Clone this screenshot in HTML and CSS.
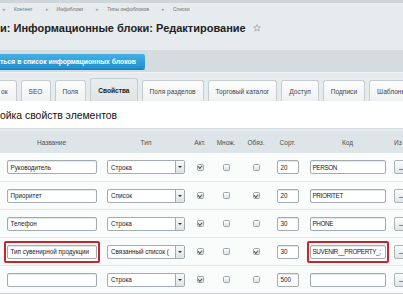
FILE: index.html
```html
<!DOCTYPE html>
<html lang="ru">
<head>
    <meta charset="UTF-8">
    <title>Информационные блоки: Редактирование</title>
    <link rel="stylesheet" href="styles.css">
</head>
<body>
    <div class="crumbs">
        <span class="crumb"><span class="arrow">▸</span>Контент</span>
        <span class="crumb"><span class="arrow">▸</span>Инфоблоки</span>
        <span class="crumb"><span class="arrow">▸</span>Типы инфоблоков</span>
        <span class="crumb"><span class="arrow">▸</span>Списки</span>
    </div>

    <div class="title-row">
        <h1 class="title">и: Информационные блоки: Редактирование</h1>
        <svg class="star" viewBox="0 0 10 10" width="8" height="8">
            <path d="M5 0.8 L6.2 3.6 L9.2 3.8 L6.9 5.8 L7.6 8.8 L5 7.2 L2.4 8.8 L3.1 5.8 L0.8 3.8 L3.8 3.6 Z" fill="none" stroke="#8f979a" stroke-width="0.8" stroke-linejoin="round"/>
        </svg>
    </div>

    <div class="toolbar">
        <a class="btn-back">ться в список информационных блоков</a>
    </div>

    <div class="tabs">
        <div class="tab tab-first">ок</div>
        <div class="tab">SEO</div>
        <div class="tab">Поля</div>
        <div class="tab active">Свойства</div>
        <div class="tab">Поля разделов</div>
        <div class="tab">Торговый каталог</div>
        <div class="tab">Доступ</div>
        <div class="tab">Подписи</div>
        <div class="tab">Шаблоны</div>
    </div>

    <div class="panel">
        <h2 class="panel-title">ойка свойств элементов</h2>
    </div>

    <div class="props">
        <div class="props-head">
            <div>Название</div>
            <div>Тип</div>
            <div>Акт.</div>
            <div>Множ.</div>
            <div>Обяз.</div>
            <div>Сорт.</div>
            <div>Код</div>
            <div class="left">Из</div>
        </div>

        <div class="props-row">
            <div><span class="field name">Руководитель</span></div>
            <div><span class="select"><span class="select-text">Строка</span><span class="select-arrow"></span></span></div>
            <div><span class="cb checked"></span></div>
            <div><span class="cb"></span></div>
            <div><span class="cb"></span></div>
            <div><span class="field sort">20</span></div>
            <div><span class="field code">PERSON</span></div>
            <div class="left"><span class="dots">...</span></div>
        </div>

        <div class="props-row">
            <div><span class="field name">Приоритет</span></div>
            <div><span class="select"><span class="select-text">Список</span><span class="select-arrow"></span></span></div>
            <div><span class="cb checked"></span></div>
            <div><span class="cb"></span></div>
            <div><span class="cb checked"></span></div>
            <div><span class="field sort">20</span></div>
            <div><span class="field code">PRIORITET</span></div>
            <div class="left"><span class="dots">...</span></div>
        </div>

        <div class="props-row">
            <div><span class="field name">Телефон</span></div>
            <div><span class="select"><span class="select-text">Строка</span><span class="select-arrow"></span></span></div>
            <div><span class="cb checked"></span></div>
            <div><span class="cb"></span></div>
            <div><span class="cb"></span></div>
            <div><span class="field sort">30</span></div>
            <div><span class="field code">PHONE</span></div>
            <div class="left"><span class="dots">...</span></div>
        </div>

        <div class="props-row">
            <div><span class="mark"><span class="field name">Тип сувенирной продукции</span></span></div>
            <div><span class="select"><span class="select-text">Связанный список (</span><span class="select-arrow"></span></span></div>
            <div><span class="cb checked"></span></div>
            <div><span class="cb"></span></div>
            <div><span class="cb checked"></span></div>
            <div><span class="field sort">30</span></div>
            <div><span class="mark"><span class="field code">SUVENIR__PROPERTY_;</span></span></div>
            <div class="left"><span class="dots">...</span></div>
        </div>

        <div class="props-row">
            <div><span class="field name"></span></div>
            <div><span class="select"><span class="select-text">Строка</span><span class="select-arrow"></span></span></div>
            <div><span class="cb checked"></span></div>
            <div><span class="cb"></span></div>
            <div><span class="cb"></span></div>
            <div><span class="field sort">500</span></div>
            <div><span class="field code"></span></div>
            <div class="left"><span class="dots">...</span></div>
        </div>
    </div>
</body>
</html>
```

FILE: styles.css
```css
* {
    margin: 0;
    padding: 0;
    box-sizing: border-box;
}

body {
    font-family: "Liberation Sans", Arial, sans-serif;
    width: 403px;
    height: 294px;
    overflow: hidden;
    background-color: #e6ebed;
    color: #333;
}

/* breadcrumbs */
.crumbs {
    height: 15px;
    border-top: 3px solid #cfd6d9;
    display: flex;
    align-items: center;
    gap: 13px;
    padding-left: 3px;
    font-size: 5px;
    color: #6b7376;
}

.crumb {
    display: flex;
    align-items: center;
}

.arrow {
    color: #9aa2a5;
    font-size: 5px;
    margin-right: 8px;
}

/* page title */
.title-row {
    height: 35px;
    display: flex;
    align-items: center;
    gap: 7px;
    padding-bottom: 9px;
}

.title {
    font-size: 11px;
    font-weight: bold;
    color: #222;
}

.toolbar {
    height: 23px;
    background-color: #d5dcdf;
    border-bottom: 1px solid #eef2f3;
    display: flex;
    align-items: center;
}

.btn-back {
    height: 15px;
    margin-left: -6px;
    padding: 0 9px 0 6px;
    display: flex;
    align-items: center;
    font-size: 6.8px;
    font-weight: bold;
    color: #fff;
    background: linear-gradient(#44b2e6, #1f8ecf);
    border-radius: 2px;
    box-shadow: 0 1px 0 #1b7bb4;
}

/* tabs */
.tabs {
    height: 28px;
    display: flex;
    align-items: flex-end;
    gap: 4px;
}

.tab {
    height: 21px;
    padding: 0 7px;
    display: flex;
    align-items: center;
    font-size: 6.6px;
    color: #444;
    white-space: nowrap;
    background: linear-gradient(#fcfdfd, #eff2f3);
    border: 1px solid #c4ccd0;
    border-bottom: none;
    border-radius: 3px 3px 0 0;
}

.tab-first {
    margin-left: -10px;
    padding-left: 10px;
    padding-right: 8px;
}

.tab.active {
    height: 23px;
    font-weight: bold;
    color: #222;
    background: linear-gradient(#e9edee, #dfe4e6);
}

/* section heading */
.panel {
    height: 28px;
    background-color: #fff;
    border-bottom: 1px solid #d7dee1;
    display: flex;
    align-items: center;
    padding-top: 1px;
}

.panel-title {
    font-size: 10.4px;
    font-weight: normal;
    color: #111;
}

/* properties table */
.props {
    margin-top: 2px;
    background-color: #fafbfb;
    border-bottom: 1px solid #c9d0d3;
}

.props-head,
.props-row {
    display: grid;
    grid-template-columns: 103px 86px 22px 30px 30px 33px 87px 1fr;
    align-items: center;
}

.props-head {
    height: 22px;
    background-color: #dee5e8;
    font-size: 6.5px;
    color: #4a5356;
}

.props-head > div,
.props-row > div {
    display: flex;
    justify-content: center;
}

.props-head > .left,
.props-row > .left {
    justify-content: flex-start;
    padding-left: 3px;
}

.props-row {
    height: 28px;
    border-top: 1px solid #e4e8ea;
}

.props-head + .props-row {
    border-top: none;
}

.field {
    height: 14px;
    display: flex;
    align-items: center;
    padding: 0 3px;
    font-size: 6.3px;
    color: #222;
    background: #fff;
    border: 1px solid #a3acb0;
    border-radius: 2px;
    box-shadow: inset 0 1px 1px #e3e6e7;
    white-space: nowrap;
    overflow: hidden;
}

.field.name {
    width: 90px;
}

.field.sort {
    width: 22px;
}

.field.code {
    width: 76px;
    padding: 0 2px;
    letter-spacing: -0.35px;
}

.mark {
    display: flex;
    padding: 2px 1px;
    border: 2px solid #c4262e;
    border-radius: 2px;
}

.select {
    width: 78px;
    height: 14px;
    display: flex;
    background: #fff;
    border: 1px solid #a3acb0;
    border-radius: 2px;
    font-size: 6.3px;
    color: #222;
}

.select-text {
    flex: 1;
    padding-left: 3px;
    display: flex;
    align-items: center;
    white-space: nowrap;
    overflow: hidden;
}

.select-arrow {
    width: 9px;
    border-left: 1px solid #a3acb0;
    background: linear-gradient(#f7f8f8, #dfe3e4);
    display: flex;
    align-items: center;
    justify-content: center;
}

.select-arrow::after {
    content: "";
    border-left: 2px solid transparent;
    border-right: 2px solid transparent;
    border-top: 2px solid #333;
}

.cb {
    width: 7px;
    height: 7px;
    border: 1px solid #9ba4a8;
    border-radius: 1.5px;
    background: linear-gradient(#fdfdfd, #dde1e2);
    display: flex;
    align-items: center;
    justify-content: center;
}

.cb.checked::after {
    content: "";
    width: 3px;
    height: 1.5px;
    border-left: 1px solid #555;
    border-bottom: 1px solid #555;
    transform: rotate(-45deg);
    margin-top: -1px;
}

.dots {
    width: 16px;
    height: 14px;
    display: flex;
    align-items: center;
    justify-content: center;
    font-size: 7px;
    font-weight: bold;
    color: #333;
    background: linear-gradient(#fbfcfc, #e2e6e7);
    border: 1px solid #aab2b6;
    border-radius: 2px;
}
```
